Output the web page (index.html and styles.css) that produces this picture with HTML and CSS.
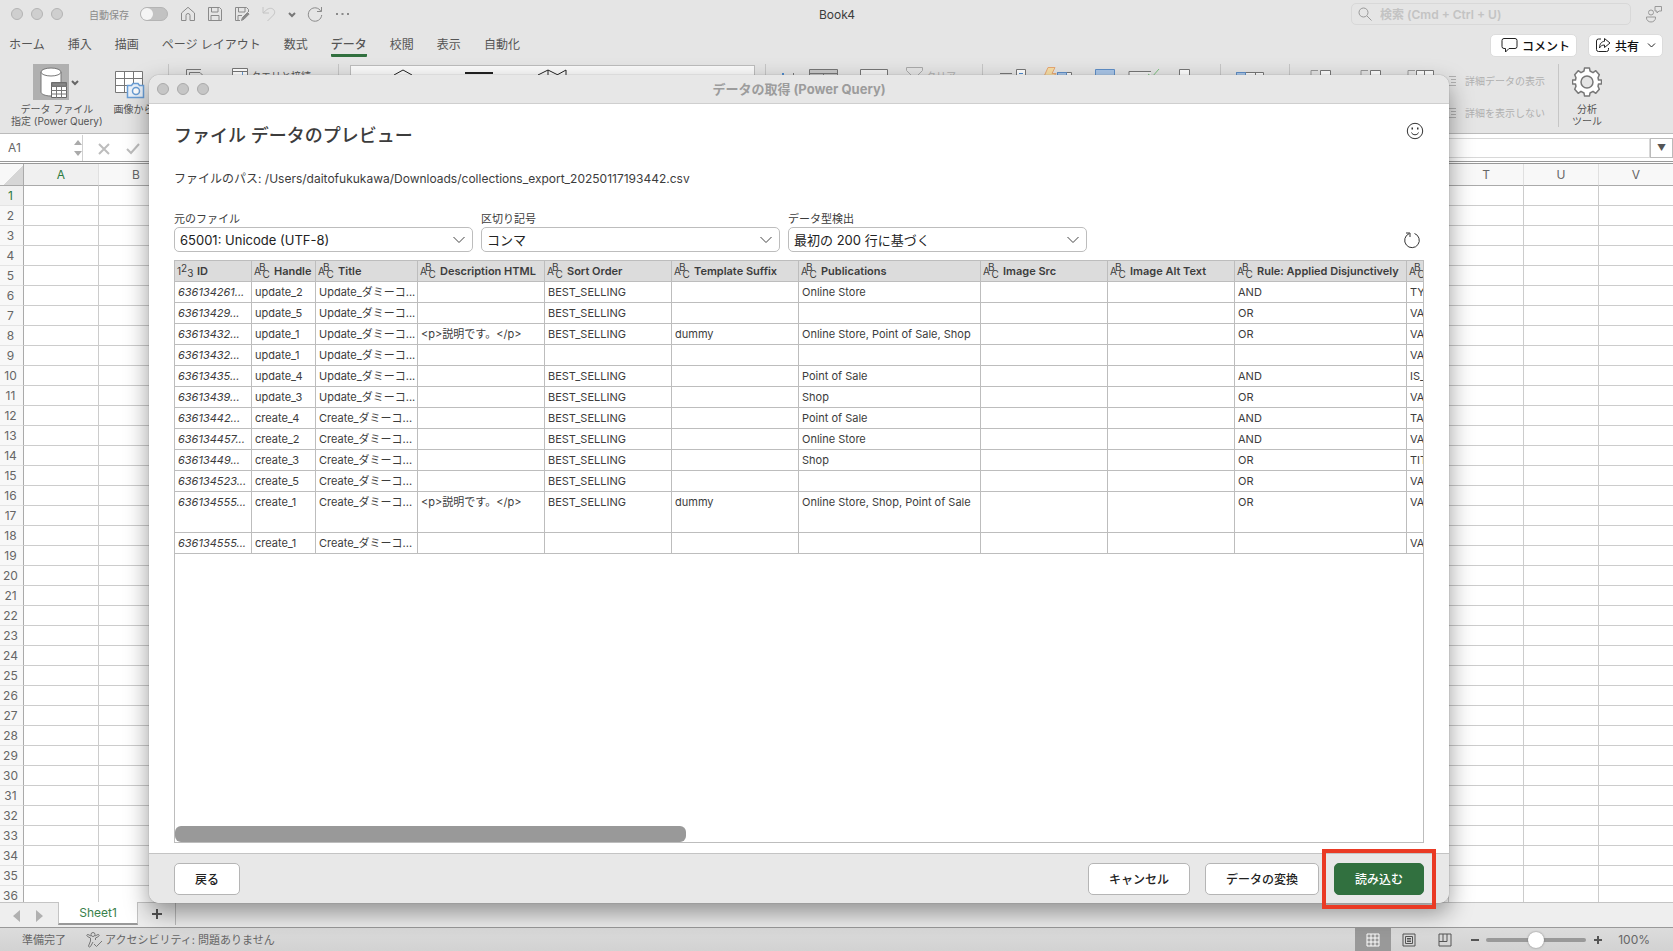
FILE: index.html
```html
<!DOCTYPE html>
<html lang="ja">
<head>
  <meta charset="utf-8">
  <title>Book4</title>
  <link rel="stylesheet" href="styles.css">
</head>

<body>
  <div class="app">
    <header class="titlebar">
      <div class="title-left">
        <div class="lights"><i></i><i></i><i></i></div>
        <label class="autosave">自動保存 <input type="checkbox" class="toggle"></label>
        <div class="quick">
          <svg width="16" height="16" viewBox="0 0 16 16"><path d="M1.5 7L8 1.3 14.500 7v7.500H10V9.500a2 2 0 0 0-4 0v5H1.500z"/></svg>
          <svg width="16" height="16" viewBox="0 0 16 16"><path d="M1.500 1.500h11l2 2v11h-13zM4.500 1.500v4.500h6.500V1.500M4 14.500V9.500h8v5"/></svg>
          <svg width="16" height="16" viewBox="0 0 16 16"><path d="M6 14.500H1.500v-13h11l2 2V6M4.500 1.500v4.500h6.500V1.500M4 14.500V9.500h4"/><path fill="#8a8a8a" d="M7.500 14.500l1-3 5-5 1.600 1.600-5 5z"/></svg>
          <svg class="dim" width="16" height="16" viewBox="0 0 16 16"><path d="M2 1v6h6M2 7l4-3.500C11 0 16 5 12.500 9L6.500 15"/></svg>
          <svg class="chev" width="8" height="16" viewBox="0 0 8 16"><path d="M1 7l3 3 3-3" stroke-width="2"/></svg>
          <svg width="16" height="16" viewBox="0 0 16 16"><path d="M14.500 1v4.500H10M14 5.500A6.700 6.700 0 1 0 14.700 9"/></svg>
          <svg width="16" height="16" viewBox="0 0 16 16"><path d="M2 8h2M7.500 8h2M13 8h2" stroke-width="2"/></svg>
        </div>
      </div>
      <div class="book-name">Book4</div>
      <div class="title-right">
        <div class="search">
          <svg width="14" height="14" viewBox="0 0 14 14"><circle cx="5.500" cy="5.500" r="4.500"/><path d="M9 9l4.500 4.500"/></svg>
          <input type="text" aria-label="検索" placeholder="検索 (Cmd + Ctrl + U)">
        </div>
        <svg class="people" width="18" height="18" viewBox="0 0 18 18"><circle cx="6" cy="7.500" r="2.500"/><path d="M1.500 12h9v1a4.500 4 0 0 1-9 0zM10 1.500h6.500V6H14l-2 2V6h-2z"/></svg>
      </div>
    </header>

    <nav class="tabs">
      <a href="#">ホーム</a>
      <a href="#">挿入</a>
      <a href="#">描画</a>
      <a href="#">ページ レイアウト</a>
      <a href="#">数式</a>
      <a href="#" class="active">データ</a>
      <a href="#">校閲</a>
      <a href="#">表示</a>
      <a href="#">自動化</a>
      <div class="tab-buttons">
        <button class="pill"><svg width="17" height="16" viewBox="0 0 17 16"><path d="M3 1.500h11a2 2 0 0 1 2 2v6a2 2 0 0 1-2 2H8L4.500 15v-3.500H3a2 2 0 0 1-2-2v-6a2 2 0 0 1 2-2z"/></svg>コメント</button>
        <button class="pill"><svg width="16" height="16" viewBox="0 0 16 16"><path d="M6 2H3.500a2 2 0 0 0-2 2v8.500a2 2 0 0 0 2 2h8a2 2 0 0 0 2-2V11M9.500 1.500L15 6l-5.500 4.500V8C7 8 5.500 9 4.500 11 4.500 7 6.500 4.500 9.500 4.300z"/></svg>共有<svg width="9" height="16" viewBox="0 0 9 16"><path d="M1 6.500l3.500 3.500L8 6.500"/></svg></button>
      </div>
    </nav>

    <div class="ribbon">
      <div class="group group-first">
        <button class="tool">
          <span class="tool-icon">
            <span class="pressed">
              <svg width="36" height="36" viewBox="0 0 36 36"><path fill="#fff" stroke="#777" d="M8 8v20c0 2 4 4 10 4s10-2 10-4V8"/><ellipse fill="#fff" stroke="#777" cx="18" cy="8" rx="10" ry="4"/><path fill="#fff" stroke="#666" d="M18.500 18.500h15v15h-15z"/><path fill="#888" d="M19 19h14v3H19z"/><path stroke="#777" d="M18 22.500h16M18 26.500h16M18 30h16M23.500 22v12M28.500 22v12"/></svg>
            </span>
            <svg width="12" height="36" viewBox="0 0 12 36"><path stroke="#666" stroke-width="2" d="M3 17l3 3 3-3"/></svg>
          </span>
          データ ファイル<br>指定 (Power Query)
        </button>
        <button class="tool tool-photo">
          <span class="tool-icon">
            <svg width="32" height="36" viewBox="0 0 32 36"><path fill="#fff" stroke="#777" d="M1.500 7.500h27v21h-27zM1.500 14.500h27M1.500 21.500h27M10.500 7.500v21M19.500 7.500v21"/><path fill="#eaf2fb" stroke="#6a9ed6" stroke-width="1.500" d="M13.500 21.500h4l1.500-2h5l1.500 2h4v12h-16z"/><circle fill="#fff" stroke="#6a9ed6" stroke-width="1.500" cx="22" cy="27" r="3.500"/></svg>
          </span>
          画像から
        </button>
      </div>
      <div class="group group-query">
        <svg width="82" height="40" viewBox="0 0 82 40"><path d="M17.500 22V5.500H32M20.500 22V8.500H31l4 4V22"/><path fill="#fff" d="M63.500 4.500h15v18h-15zM63.500 7.500h15"/><path stroke="#6a9ed6" d="M73.500 8v14"/></svg>
        <span>クエリと接続</span>
      </div>
      <div class="group group-types">
        <div class="gallery">
          <svg width="403" height="20" viewBox="0 0 403 20"><path stroke="#222" d="M43 9l9-5 9 5v8H43zM187 9l10-5 10 5v8zM197 4v14M206 9l9-5v14"/><path stroke="#222" stroke-width="2" d="M114 7h28"/></svg>
        </div>
      </div>
      <div class="group group-sort">
        <svg width="160" height="40" viewBox="0 0 160 40"><path stroke="#4f8cd0" stroke-width="2" d="M17 9v4"/><path d="M27.500 9v14"/><path fill="#c9c9c9" d="M43.500 5.500h28v18h-28zM43.500 9.500h28M57.500 9v12"/><path fill="#f4f4f4" d="M94.500 5.500h27v18h-27z"/><path stroke="#aaa" d="M140.500 3.500h16v3l-6 6v7h-4v-7l-6-6z"/></svg>
        <span class="faint">クリア</span>
      </div>
      <div class="group group-tools">
        <svg width="230" height="40" viewBox="0 0 230 40"><path d="M17 9.500h12"/><path fill="#fff" d="M33.500 5.500h9v14h-9z"/><path stroke="#4f8cd0" d="M36 9.500h4"/><path fill="#f8dfa6" stroke="#e8a873" d="M65 3.500h7l-3 6h4l-10 12 3-9h-5z"/><path fill="#fff" d="M74.500 8.500h14v10h-14z"/><path fill="#a9c6e8" stroke="#5f8fc8" d="M74.500 8.500h9v10h-9zM112.500 5.500h19v14h-19z"/><path fill="#f4f4f4" d="M168 7.500h-22v12h22"/><path stroke="#7cc07f" d="M165 10l4 3 7-8"/><path fill="#fff" d="M196.500 5.500h10v14h-10z"/></svg>
      </div>
      <div class="group group-forecast">
        <svg width="60" height="40" viewBox="0 0 60 40"><path fill="#fff" d="M15.500 8.500h27v12h-27zM34.500 8.500v12"/><path fill="#a9c6e8" stroke="#5f8fc8" d="M15.500 8.500h9v12h-9z"/></svg>
      </div>
      <div class="group group-outline">
        <svg width="156" height="40" viewBox="0 0 156 40"><path stroke="#999" d="M28 6.500h-7v14M78 6.500h-7v14M125 6.500h-7v14"/><path fill="#fff" d="M30.500 6.500h10v14h-10zM80.500 6.500h10v14h-10zM126.500 6.500h17v14h-17zM134.500 6.500v14"/></svg>
        <div class="outline-list faint">
          <span><svg width="12" height="12" viewBox="0 0 12 12"><path d="M3 1.500h7M5 4.500h5M5 7.500h5M3 10.500h7"/></svg>詳細データの表示</span>
          <span><svg width="12" height="12" viewBox="0 0 12 12"><path d="M3 1.500h7M5 4.500h5M5 7.500h5M3 10.500h7"/></svg>詳細を表示しない</span>
        </div>
      </div>
      <div class="group group-analysis">
        <button class="tool">
          <span class="tool-icon">
            <svg width="30" height="36" viewBox="0 0 30 36"><path fill="#fff" stroke="#777" stroke-width="1.500" stroke-linejoin="round" d="M12 7l.5-3h5l.500 3 3 1.700 2.800-2 3.500 4-1.300 3 .5 2.300h3v4h-3l-.500 2.300 1.300 3-3.500 4-2.800-2-3 1.700-.500 3h-5l-.500-3-3-1.700-2.800 2-3.500-4 1.300-3L3.500 20h-3v-4h3l.500-2.300-1.300-3 3.500-4 2.800 2z"/><circle fill="#e5e5e5" stroke="#777" stroke-width="1.500" cx="15" cy="18" r="6"/></svg>
          </span>
          分析<br>ツール
        </button>
      </div>
    </div>

    <div class="formula-bar">
      <div class="name-box">
        <input type="text" aria-label="名前ボックス" value="A1">
        <svg width="8" height="18" viewBox="0 0 8 18"><path d="M0 6l4-5 4 5zM0 12l4 5 4-5z"/></svg>
      </div>
      <svg class="fx" width="44" height="14" viewBox="0 0 44 14"><path d="M2 2l10 10M12 2L2 12M30 7l4 4 8-9"/></svg>
      <input class="formula" type="text" aria-label="数式バー">
      <button class="expand">▼</button>
    </div>

    <div class="sheet">
      <table id="grid"></table>
    </div>

    <div class="sheet-tabs">
      <svg width="32" height="12" viewBox="0 0 32 12"><path d="M8 0v12L1 6zM24 0v12l7-6z"/></svg>
      <button class="sheet-tab">Sheet1</button>
      <button class="add-sheet" aria-label="シートの追加"><svg width="12" height="12" viewBox="0 0 12 12"><path d="M6 1v10M1 6h10"/></svg></button>
    </div>

    <footer class="status">
      <span>準備完了</span>
      <span class="access"><svg width="17" height="16" viewBox="0 0 17 16"><circle cx="7" cy="2.500" r="2"/><path d="M5 4L2 2.500c-1.500 0-1.500 1.500-.5 2L4.500 6v3L2.500 14c0 1 1.500 1.500 2 .5L7 10M9 4l3-1.500c1.500 0 1.500 1.500.5 2L9.500 6v2M8 12l2.500 2.500L16 9"/></svg>アクセシビリティ: 問題ありません</span>
      <div class="view">
        <button class="view-btn on" aria-label="標準"><svg width="14" height="14" viewBox="0 0 14 14"><path d="M1 1h12v12H1zM1 5h12M1 9h12M5 1v12M9 1v12"/></svg></button>
        <button class="view-btn" aria-label="ページ レイアウト"><svg width="14" height="14" viewBox="0 0 14 14"><path d="M1 1h12v12H1zM3.500 3.500h7v7h-7zM5 5.500h4M5 7h4M5 8.500h4"/></svg></button>
        <button class="view-btn" aria-label="改ページ"><svg width="14" height="14" viewBox="0 0 14 14"><path d="M1 1h12v12H1zM1 8.500h8V1M5 1v7"/></svg></button>
        <button class="zoom-btn" aria-label="縮小"><svg width="8" height="8" viewBox="0 0 8 8"><path d="M0 4h8"/></svg></button>
        <input type="range" aria-label="ズーム" min="0" max="100" value="50">
        <button class="zoom-btn" aria-label="拡大"><svg width="8" height="8" viewBox="0 0 8 8"><path d="M0 4h8M4 0v8"/></svg></button>
        <span class="percent">100%</span>
      </div>
    </footer>
  </div>

  <section class="dialog" role="dialog" aria-labelledby="dialog-title">
    <div class="dialog-bar">
      <div class="lights"><i></i><i></i><i></i></div>
      <div id="dialog-title">データの取得 (Power Query)</div>
    </div>
    <div class="dialog-body">
      <div class="heading">
        <h1>ファイル データのプレビュー</h1>
        <button class="icon-btn" aria-label="フィードバック"><svg width="18" height="18" viewBox="0 0 18 18"><circle cx="9" cy="9" r="7.700"/><path d="M5.500 10.500c1 3 6 3 7 0"/><path stroke-width="2" d="M5.500 6.500h1.500M11 6.500h1.500"/></svg></button>
      </div>
      <p class="path">ファイルのパス: /Users/daitofukukawa/Downloads/collections_export_20250117193442.csv</p>
      <div class="options">
        <div class="field">
          <label for="origin">元のファイル</label>
          <div class="select"><select id="origin"><option>65001: Unicode (UTF-8)</option></select><svg width="14" height="8" viewBox="0 0 14 8"><path d="M1.500 1L7 6.500 12.500 1"/></svg></div>
        </div>
        <div class="field">
          <label for="delimiter">区切り記号</label>
          <div class="select"><select id="delimiter"><option>コンマ</option></select><svg width="14" height="8" viewBox="0 0 14 8"><path d="M1.500 1L7 6.500 12.500 1"/></svg></div>
        </div>
        <div class="field">
          <label for="detect">データ型検出</label>
          <div class="select"><select id="detect"><option>最初の 200 行に基づく</option></select><svg width="14" height="8" viewBox="0 0 14 8"><path d="M1.500 1L7 6.500 12.500 1"/></svg></div>
        </div>
        <button class="icon-btn refresh" aria-label="更新"><svg width="18" height="18" viewBox="0 0 18 18"><path d="M11.500 2.500a7.300 7.300 0 1 1-5.500.200M3 2h4v4"/></svg></button>
      </div>

      <div class="preview">
        <table>
          <colgroup>
            <col class="c-id"><col class="c-handle"><col class="c-title"><col class="c-mid"><col class="c-mid"><col class="c-mid"><col class="c-pub"><col class="c-mid"><col class="c-mid"><col class="c-rule"><col class="c-mid">
          </colgroup>
          <thead>
            <tr>
              <th><span class="num">1<b>2</b><i>3</i></span>ID</th>
              <th><span class="abc">A<b>B</b><i>C</i></span>Handle</th>
              <th><span class="abc">A<b>B</b><i>C</i></span>Title</th>
              <th><span class="abc">A<b>B</b><i>C</i></span>Description HTML</th>
              <th><span class="abc">A<b>B</b><i>C</i></span>Sort Order</th>
              <th><span class="abc">A<b>B</b><i>C</i></span>Template Suffix</th>
              <th><span class="abc">A<b>B</b><i>C</i></span>Publications</th>
              <th><span class="abc">A<b>B</b><i>C</i></span>Image Src</th>
              <th><span class="abc">A<b>B</b><i>C</i></span>Image Alt Text</th>
              <th><span class="abc">A<b>B</b><i>C</i></span>Rule: Applied Disjunctively</th>
              <th><span class="abc">A<b>B</b><i>C</i></span></th>
            </tr>
          </thead>
          <tbody>
            <tr><td>636134261...</td><td>update_2</td><td>Update_ダミーコ...</td><td></td><td>BEST_SELLING</td><td></td><td>Online Store</td><td></td><td></td><td>AND</td><td>TY</td></tr>
            <tr><td>63613429...</td><td>update_5</td><td>Update_ダミーコ...</td><td></td><td>BEST_SELLING</td><td></td><td></td><td></td><td></td><td>OR</td><td>VA</td></tr>
            <tr><td>63613432...</td><td>update_1</td><td>Update_ダミーコ...</td><td>&lt;p&gt;説明です。&lt;/p&gt;</td><td>BEST_SELLING</td><td>dummy</td><td>Online Store, Point of Sale, Shop</td><td></td><td></td><td>OR</td><td>VA</td></tr>
            <tr><td>63613432...</td><td>update_1</td><td>Update_ダミーコ...</td><td></td><td></td><td></td><td></td><td></td><td></td><td></td><td>VA</td></tr>
            <tr><td>63613435...</td><td>update_4</td><td>Update_ダミーコ...</td><td></td><td>BEST_SELLING</td><td></td><td>Point of Sale</td><td></td><td></td><td>AND</td><td>IS_</td></tr>
            <tr><td>63613439...</td><td>update_3</td><td>Update_ダミーコ...</td><td></td><td>BEST_SELLING</td><td></td><td>Shop</td><td></td><td></td><td>OR</td><td>VA</td></tr>
            <tr><td>63613442...</td><td>create_4</td><td>Create_ダミーコ...</td><td></td><td>BEST_SELLING</td><td></td><td>Point of Sale</td><td></td><td></td><td>AND</td><td>TA</td></tr>
            <tr><td>636134457...</td><td>create_2</td><td>Create_ダミーコ...</td><td></td><td>BEST_SELLING</td><td></td><td>Online Store</td><td></td><td></td><td>AND</td><td>VA</td></tr>
            <tr><td>63613449...</td><td>create_3</td><td>Create_ダミーコ...</td><td></td><td>BEST_SELLING</td><td></td><td>Shop</td><td></td><td></td><td>OR</td><td>TIT</td></tr>
            <tr><td>636134523...</td><td>create_5</td><td>Create_ダミーコ...</td><td></td><td>BEST_SELLING</td><td></td><td></td><td></td><td></td><td>OR</td><td>VA</td></tr>
            <tr class="tall"><td>636134555...</td><td>create_1</td><td>Create_ダミーコ...</td><td>&lt;p&gt;説明です。&lt;/p&gt;</td><td>BEST_SELLING</td><td>dummy</td><td>Online Store, Shop, Point of Sale</td><td></td><td></td><td>OR</td><td>VA</td></tr>
            <tr><td>636134555...</td><td>create_1</td><td>Create_ダミーコ...</td><td></td><td></td><td></td><td></td><td></td><td></td><td></td><td>VA</td></tr>
          </tbody>
        </table>
        <div class="scrollbar"></div>
      </div>
    </div>
    <div class="dialog-footer">
      <button class="btn back">戻る</button>
      <button class="btn">キャンセル</button>
      <button class="btn">データの変換</button>
      <button class="btn primary">読み込む</button>
    </div>
  </section>

  <script>
    var cols = "ABCDEFGHIJKLMNOPQRSTUV";
    var html = '<thead><tr><th class="corner"></th>';
    for (var c = 0; c < cols.length; c++) {
      html += "<th" + (c == 0 ? ' class="sel"' : "") + ">" + cols[c] + "</th>";
    }
    html += "</tr></thead><tbody>";
    for (var r = 1; r <= 36; r++) {
      html += "<tr><th" + (r == 1 ? ' class="sel"' : "") + ">" + r + "</th>";
      for (var c = 0; c < cols.length; c++) {
        html += "<td></td>";
      }
      html += "</tr>";
    }
    document.getElementById("grid").innerHTML = html + "</tbody>";
  </script>
</body>
</html>
```
FILE: styles.css
```css
* {
  box-sizing: border-box;
}

body {
  margin: 0;
  font-family: Inter, "Noto Sans CJK JP", sans-serif;
  font-size: 12px;
  color: #3c3c3c;
}

button,
input,
select {
  font: inherit;
  color: inherit;
  margin: 0;
  padding: 0;
  border: none;
  background: none;
}

svg {
  fill: none;
  stroke: #777;
  flex: none;
  display: block;
}

a {
  color: inherit;
  text-decoration: none;
}

.app {
  height: 100vh;
  display: flex;
  flex-direction: column;
  overflow: hidden;
  background: #e5e5e5;
}

/* title bar */
.titlebar {
  display: grid;
  grid-template-columns: 1fr auto 1fr;
  align-items: center;
  height: 28px;
  padding: 0 10px 0 11px;
}

.title-left,
.title-right,
.quick,
.autosave,
.lights {
  display: flex;
  align-items: center;
}

.lights {
  gap: 8px;
}

.lights i {
  width: 12px;
  height: 12px;
  border: 1px solid #b4b4b4;
  border-radius: 50%;
  background: #cfcfcf;
}

.autosave {
  margin-left: 26px;
  gap: 11px;
  font-size: 10px;
  color: #8a8a8a;
}

.toggle {
  appearance: none;
  width: 28px;
  height: 14px;
  border-radius: 7px;
  border: 1px solid #b4b4b4;
  background: #c2c2c2;
}

.toggle::before {
  content: "";
  display: block;
  width: 12px;
  height: 12px;
  border-radius: 50%;
  background: #f4f4f4;
}

.quick {
  margin-left: 12px;
  gap: 11px;
}

.quick svg {
  stroke: #8a8a8a;
}

.quick .dim {
  stroke: #c4c4c4;
}

.quick .chev {
  stroke: #777;
}

.book-name {
  font-size: 12px;
}

.title-right {
  justify-content: flex-end;
  gap: 14px;
}

.search {
  display: flex;
  align-items: center;
  gap: 8px;
  width: 280px;
  height: 22px;
  padding: 0 6px;
  border: 1px solid #d8d8d8;
  border-radius: 5px;
}

.search svg {
  stroke: #999;
}

.search input {
  flex: 1;
  min-width: 0;
}

.search input::placeholder {
  color: #c3c3c3;
  font-weight: 600;
}

.people {
  stroke: #999;
}

/* ribbon tabs */
.tabs {
  display: flex;
  align-items: center;
  gap: 23px;
  height: 32px;
  padding: 2px 10px 0 9px;
  font-size: 12px;
  color: #555;
}

.tabs a {
  height: 24px;
  line-height: 24px;
  white-space: nowrap;
}

.tabs .active {
  border-bottom: 3px solid #31703f;
  border-radius: 1px;
  font-weight: 500;
}

.tab-buttons {
  display: flex;
  gap: 11px;
  margin-left: auto;
}

.pill {
  display: flex;
  align-items: center;
  gap: 4px;
  height: 23px;
  padding: 0 6px;
  border: 1px solid #dcdcdc;
  border-radius: 5px;
  background: #fff;
  color: #111;
  font-weight: 500;
}

.pill svg {
  stroke: #222;
}

.pill svg:last-child {
  margin-left: 4px;
}

/* ribbon */
.ribbon {
  display: flex;
  height: 74px;
  padding-top: 4px;
  border-bottom: 1px solid #bbb;
  font-size: 10px;
  line-height: 12px;
  color: #555;
  white-space: nowrap;
}

.group {
  display: flex;
  height: 63px;
  border-right: 1px solid #c6c6c6;
  overflow: hidden;
}

.group-first {
  width: 169px;
  padding-left: 11px;
}

.tool {
  flex: none;
  white-space: nowrap;
  text-align: center;
}

.tool-icon {
  display: flex;
  justify-content: center;
  height: 37px;
  margin-bottom: 2px;
}

.pressed {
  background: #b0b0b0;
  height: 36px;
}

.tool-photo {
  margin-left: 11px;
  align-self: flex-start;
}

.tool-photo .tool-icon {
  justify-content: flex-start;
}

.group-query {
  width: 170px;
}

.group-query span,
.group-sort span {
  margin-top: 6px;
}

.group-types {
  width: 427px;
  padding: 1px 0 0 11px;
}

.gallery {
  width: 405px;
  height: 62px;
  border: 1px solid #bdbdbd;
  background: #fbfbfb;
}

.group-sort {
  width: 217px;
}

.faint {
  color: #b0b0b0;
}

.faint svg {
  stroke: #b0b0b0;
}

.group-tools {
  width: 238px;
}

.group-forecast {
  width: 69px;
}

.group-outline {
  width: 269px;
}

.outline-list {
  display: flex;
  flex-direction: column;
  gap: 20px;
  padding-top: 11px;
}

.outline-list span {
  display: flex;
  align-items: center;
  gap: 7px;
}

.group-analysis {
  flex: 1;
  border-right: none;
  padding-left: 13px;
}

/* formula bar */
.formula-bar {
  display: flex;
  align-items: center;
  height: 30px;
  background: #fff;
  border-bottom: 3px double #999;
}

.name-box {
  display: flex;
  align-items: center;
  width: 83px;
  height: 26px;
  padding-left: 8px;
  border-right: 1px solid #d0d0d0;
  color: #666;
}

.name-box input {
  flex: 1;
  width: 60px;
}

.name-box svg {
  fill: #aaa;
  stroke: none;
}

.fx {
  margin: 2px 10px 0 14px;
  stroke: #bdbdbd;
  stroke-width: 2;
}

.formula {
  flex: 1;
  height: 20px;
  border: 1px solid #d8d8d8;
}

.expand {
  width: 23px;
  height: 20px;
  border: 1px solid #bbb;
  color: #555;
  font-size: 9px;
}

/* worksheet grid */
.sheet {
  flex: 1;
  overflow: hidden;
  min-height: 0;
  background: #fff;
}

#grid {
  table-layout: fixed;
  border-collapse: separate;
  border-spacing: 0;
  width: 1674px;
}

#grid th,
#grid td {
  height: 20px;
  padding: 0;
  border-right: 1px solid #ccc;
  border-bottom: 1px solid #ccc;
  line-height: 19px;
}

#grid th {
  background: #f8f8f8;
  font-weight: 400;
  color: #666;
}

#grid thead th {
  height: 22px;
  border-right-color: #e0e0e0;
  border-bottom-color: #aaa;
}

#grid tbody th {
  border-right-color: #aaa;
  border-bottom-color: #e4e4e4;
  padding-right: 2px;
}

#grid .sel {
  background: #f0f0f0;
  color: #2b7a40;
}

#grid .corner {
  width: 24px;
  border-right-color: #aaa;
  background: linear-gradient(135deg, #f8f8f8 55%, #d6d6d6 55%);
}

/* sheet tabs */
.sheet-tabs {
  display: flex;
  align-items: flex-start;
  height: 26px;
  border-top: 1px solid #c4c4c4;
  border-bottom: 1px solid #999;
  background: #eee;
}

.sheet-tabs svg {
  fill: #b0b0b0;
  stroke: none;
  margin: 7px 14px 0 12px;
}

.sheet-tab {
  width: 80px;
  height: 23px;
  margin-top: -1px;
  background: #fff;
  border: 1px solid #c4c4c4;
  border-top: none;
  border-bottom: 2px solid #999;
  color: #38804a;
}

.add-sheet {
  width: 38px;
  height: 22px;
  border-right: 1px solid #bbb;
}

.sheet-tabs .add-sheet svg {
  margin: 0 0 0 13px;
  stroke: #555;
  stroke-width: 2;
}

/* status bar */
.status {
  display: flex;
  align-items: center;
  height: 23px;
  padding-left: 22px;
  background: linear-gradient(#dcdcdc, #d2d2d2);
  font-size: 11px;
  line-height: 20px;
  color: #666;
}

.access {
  display: flex;
  align-items: center;
  gap: 2px;
  margin-left: 20px;
}

.view {
  display: flex;
  align-items: center;
  margin-left: auto;
  padding-right: 23px;
}

.view svg {
  margin: 0 auto;
  stroke: #555;
}

.view-btn {
  width: 36px;
  height: 23px;
}

.view-btn.on {
  background: #999;
}

.view-btn.on svg {
  stroke: #fff;
}

.zoom-btn {
  width: 8px;
  margin: 0 7px 0 8px;
}

.zoom-btn svg {
  stroke-width: 2;
}

.view input {
  appearance: none;
  width: 100px;
  height: 4px;
  border-radius: 2px;
  background: #999;
}

.view input::-webkit-slider-thumb {
  appearance: none;
  width: 16px;
  height: 16px;
  border-radius: 50%;
  background: #fff;
  box-shadow: 0 0 2px #777;
}

.percent {
  margin-left: 9px;
  font-size: 12px;
}

/* power query dialog */
.dialog {
  position: absolute;
  top: 75px;
  right: 224px;
  bottom: 48px;
  left: 149px;
  display: flex;
  flex-direction: column;
  border-radius: 10px;
  background: #fff;
  box-shadow: 0 0 1px #666, 0 10px 24px rgba(0, 0, 0, 0.4);
}

.dialog-bar {
  display: grid;
  grid-template-columns: 1fr auto 1fr;
  align-items: center;
  height: 29px;
  padding: 0 8px;
  border-bottom: 1px solid #cfcfcf;
  border-radius: 10px 10px 0 0;
  background: #e7e7e7;
}

.dialog-bar .lights i {
  background: #c6c6c6;
  border-color: #aaa;
}

#dialog-title {
  font-size: 13px;
  line-height: 26px;
  font-weight: 700;
  color: #9c9c9c;
}

.dialog-body {
  flex: 1;
  display: flex;
  flex-direction: column;
  min-height: 0;
  padding: 18px 25px 10px;
}

.heading {
  display: flex;
  justify-content: space-between;
  align-items: flex-start;
}

h1 {
  margin: 0;
  font-size: 18px;
  line-height: 28px;
  font-weight: 500;
}

.icon-btn svg {
  stroke: #333;
}

.path {
  margin: 20px 0 23px;
  font-size: 12px;
  line-height: 18px;
}

.options {
  display: flex;
  gap: 8px;
  margin-bottom: 8px;
}

.field {
  flex: 0 1 299px;
}

.field label {
  display: block;
  font-size: 11px;
  line-height: 16px;
}

.select {
  position: relative;
}

.select select {
  appearance: none;
  display: block;
  width: 100%;
  height: 25px;
  padding: 0 5px;
  border: 1px solid #bdbdbd;
  border-radius: 5px;
  background: #fff;
  font-size: 13px;
  color: #222;
}

.select svg {
  position: absolute;
  top: 9px;
  right: 7px;
  stroke: #444;
  pointer-events: none;
}

.refresh {
  margin: 17px 3px 0 auto;
}

.preview {
  flex: 1;
  display: flex;
  flex-direction: column;
  min-height: 0;
  overflow: hidden;
  border: 1px solid #bdbdbd;
}

.preview table {
  table-layout: fixed;
  width: 1359px;
  border-collapse: separate;
  border-spacing: 0;
  font-size: 11px;
}

.c-id { width: 77px; }
.c-handle { width: 64px; }
.c-title { width: 102px; }
.c-mid { width: 127px; }
.c-pub { width: 182px; }
.c-rule { width: 172px; }

.preview th,
.preview td {
  height: 21px;
  padding: 0 0 0 3px;
  border-right: 1px solid #bdbdbd;
  border-bottom: 1px solid #bdbdbd;
  line-height: 20px;
  text-align: left;
  vertical-align: top;
  white-space: nowrap;
  overflow: hidden;
}

.preview th {
  padding-left: 2px;
  background: #dcdcdc;
  font-weight: 600;
}

.preview td:first-child {
  font-style: italic;
}

.preview .tall td {
  height: 41px;
}

/* staggered data type marks */
.abc,
.num {
  display: inline-flex;
  width: 20px;
  height: 20px;
  vertical-align: top;
  font-size: 10px;
  font-weight: 400;
}

.abc b,
.abc i,
.num b,
.num i {
  font-weight: 400;
  font-style: normal;
}

.abc b {
  margin: -4px 0 0 -2px;
}

.abc i {
  margin: 3px 0 0 -3px;
}

.num b {
  margin-top: -3px;
}

.num i {
  margin-top: 2px;
}

.scrollbar {
  width: 511px;
  height: 16px;
  margin-top: auto;
  border-radius: 6px;
  background: #999;
}

.dialog-footer {
  display: flex;
  align-items: center;
  gap: 15px;
  height: 50px;
  padding: 0 25px;
  border-top: 1px solid #c4c4c4;
  border-radius: 0 0 10px 10px;
  background: #e8e8e8;
}

.btn {
  position: relative;
  height: 32px;
  padding: 0 20px;
  border: 1px solid #b5b5b5;
  border-radius: 5px;
  background: #fff;
  color: #222;
  font-weight: 500;
}

.back {
  margin-right: auto;
}

.primary {
  border-color: #31703f;
  background: #31703f;
  color: #fff;
}

/* highlight frame round the load button */
.primary::after {
  content: "";
  position: absolute;
  inset: -15px -13px;
  border: 4px solid #ea3a24;
}
```
